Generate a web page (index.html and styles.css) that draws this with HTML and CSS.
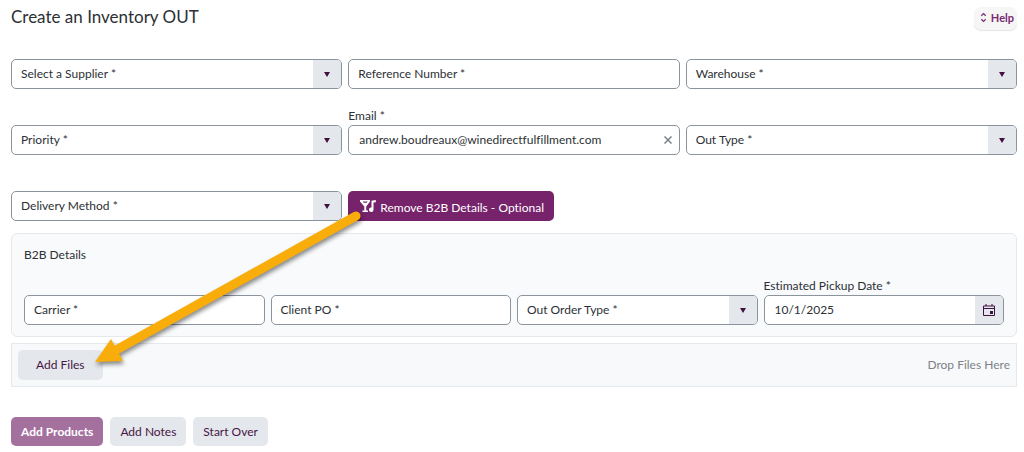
FILE: index.html
```html
<!DOCTYPE html>
<html lang="en">
<head>
  <meta charset="utf-8">
  <title>Create an Inventory OUT</title>
  <link rel="stylesheet" href="styles.css">
</head>
<body>
  <header class="page-head">
    <h1>Create an Inventory OUT</h1>
    <button type="button" class="help">
      <svg width="7" height="11" viewBox="0 0 8 12"><path d="M1.5 4 4 1.5 6.500 4M1.500 8 4 10.500 6.500 8" fill="none" stroke="currentColor" stroke-width="1.400"/></svg>
      Help
    </button>
  </header>

  <form>
    <div class="row thirds">
      <div class="field empty">
        <label for="supplier">Select a Supplier *</label>
        <select id="supplier"><option></option></select>
        <span class="arrow"></span>
      </div>
      <div class="field empty">
        <label for="reference">Reference Number *</label>
        <input type="text" id="reference">
      </div>
      <div class="field empty">
        <label for="warehouse">Warehouse *</label>
        <select id="warehouse"><option></option></select>
        <span class="arrow"></span>
      </div>

      <div class="field empty">
        <label for="priority">Priority *</label>
        <select id="priority"><option></option></select>
        <span class="arrow"></span>
      </div>
      <div class="field">
        <label for="email">Email *</label>
        <input type="email" id="email" value="andrew.boudreaux@winedirectfulfillment.com">
        <button type="button" class="clear">
          <svg width="8" height="8" viewBox="0 0 8 8"><path d="M.5.5l7 7M7.500.5l-7 7" stroke="currentColor" stroke-width="1.500"/></svg>
        </button>
      </div>
      <div class="field empty">
        <label for="out-type">Out Type *</label>
        <select id="out-type"><option></option></select>
        <span class="arrow"></span>
      </div>

      <div class="field empty">
        <label for="delivery">Delivery Method *</label>
        <select id="delivery"><option></option></select>
        <span class="arrow"></span>
      </div>
      <div class="field">
        <button type="button" class="btn toggle">
          <svg width="16" height="13" viewBox="0 0 16 13" fill="currentColor">
            <path fill-rule="evenodd" d="M0 0h10v1.500L6.200 6.500V10.500H8V12H2.500v-1.500h1.800v-4L0 1.500zM2.800 1.600l.9 1.200h3l.9-1.200z"/>
            <path d="M11.500.8 15.800 0v2.200l-2.300.4v7.200a2.300 2.300 0 1 1-2-2.300z"/>
          </svg>
          <span>Remove B2B Details - Optional</span>
        </button>
      </div>
    </div>

    <section class="panel">
      <h2>B2B Details</h2>
      <div class="row quarters">
        <div class="field empty">
          <label for="carrier">Carrier *</label>
          <input type="text" id="carrier">
        </div>
        <div class="field empty">
          <label for="client-po">Client PO *</label>
          <input type="text" id="client-po">
        </div>
        <div class="field empty">
          <label for="order-type">Out Order Type *</label>
          <select id="order-type"><option></option></select>
          <span class="arrow"></span>
        </div>
        <div class="field">
          <label for="pickup">Estimated Pickup Date *</label>
          <input type="text" id="pickup" value="10/1/2025">
          <button type="button" class="calendar">
            <svg width="12" height="12" viewBox="0 0 12 12" fill="none" stroke="currentColor"><path d="M.5 2h11v9.500H.5zM.5 4.500h11M3 0v2M9 0v2"/><path d="M7 7h3v3H7z" fill="currentColor" stroke="none"/></svg>
          </button>
        </div>
      </div>
    </section>

    <div class="dropzone">
      <button type="button" class="btn add-files">Add Files</button>
      <span>Drop Files Here</span>
    </div>

    <div class="actions">
      <button type="button" class="btn primary">Add Products</button>
      <button type="button" class="btn">Add Notes</button>
      <button type="button" class="btn">Start Over</button>
    </div>
  </form>

  <!-- arrow from the B2B button to Add Files -->
  <svg class="callout" width="280" height="170" viewBox="0 0 280 170">
    <path d="M266 16 28 149" stroke="#f9ad0b" stroke-width="9" stroke-linecap="round"/>
    <path d="M5 162 21 139 33 161z" fill="#f9ad0b"/>
  </svg>
</body>
</html>
```
FILE: styles.css
```css
* {
  box-sizing: border-box;
}

body {
  margin: 0;
  padding: 7px 7px 6px 11px;
  position: relative;
  background: #fff;
  color: #2c3035;
  font: 12px/18px Lato, "Liberation Sans", sans-serif;
  font-variant-ligatures: none;
}

button, input, select {
  font: inherit;
  font-variant-ligatures: none;
  color: inherit;
}

h1, h2 {
  margin: 0;
  font-weight: 400;
}

h1 {
  font-size: 17px;
  line-height: 20px;
}

h2 {
  font-size: 12px;
}

.page-head {
  display: flex;
  justify-content: space-between;
  align-items: flex-start;
  height: 34px;
}

.help {
  display: flex;
  align-items: center;
  gap: 4px;
  height: 23px;
  padding: 0 3px 2px 6px;
  border: 0;
  border-radius: 7px;
  background: #f6f6f6;
  box-shadow: 0 1px 1px #e4e4e4;
  color: #7a2a72;
  font-size: 11px;
  font-weight: 700;
}

.row {
  display: grid;
  gap: 18px 6px;
}

.thirds {
  grid-template-columns: repeat(3, 1fr);
}

.quarters {
  grid-template-columns: repeat(4, 1fr);
}

.field {
  display: grid;
  grid-template: 18px 30px / minmax(0, 1fr);
}

.field > * {
  grid-area: 2 / 1;
}

.field > label {
  grid-row: 1;
}

.field.empty > label {
  grid-row: 2;
  z-index: 1;
  align-self: center;
  padding-left: 10px;
  pointer-events: none;
}

.field input,
.field select {
  width: 100%;
  height: 30px;
  margin: 0;
  padding: 0 10px 2px;
  border: 1px solid #8b949d;
  border-radius: 5px;
  background: #fff;
  appearance: none;
}

.arrow,
.calendar {
  justify-self: end;
  display: flex;
  align-items: center;
  justify-content: center;
  width: 28px;
  margin: 1px;
  padding: 0;
  border: 0;
  border-radius: 0 4px 4px 0;
  background: #e4e7ec;
  color: #3f1140;
}

.arrow {
  pointer-events: none;
}

.arrow::before {
  content: "";
  border: solid transparent;
  border-width: 5px 3px 0;
  border-top-color: #3f1140;
}

.clear {
  justify-self: end;
  width: 24px;
  padding: 0;
  border: 0;
  background: none;
  color: #7b8086;
}

.btn {
  height: 29px;
  padding: 0 10px;
  border: 0;
  border-radius: 5px;
  background: #e4e7ec;
  color: #471645;
}

.toggle {
  display: flex;
  gap: 4px;
  justify-self: start;
  align-items: center;
  height: 30px;
  padding: 0 10px 0 12px;
  background: #76236c;
  color: #fff;
}

.toggle span {
  padding-top: 4px;
}

.panel {
  margin-top: 12px;
  padding: 12px 12px 11px;
  border: 1px solid #e6e9ec;
  border-radius: 6px;
  background: #f9fafc;
}

.panel .row {
  margin-top: 13px;
}

.dropzone {
  display: flex;
  align-items: center;
  justify-content: space-between;
  margin-top: 6px;
  padding: 6px;
  border: 1px solid #e6e9ec;
  background: #f8f9fb;
  color: #7d8287;
}

.add-files {
  height: 30px;
  padding: 0 18px;
}

.actions {
  display: flex;
  gap: 7px;
  margin-top: 30px;
}

.primary {
  background: #a4719f;
  color: #fff;
  font-weight: 700;
}

.callout {
  position: absolute;
  left: 90px;
  top: 200px;
  pointer-events: none;
  filter: drop-shadow(1px 3px 2px rgba(0, 0, 0, 0.45));
}
```
